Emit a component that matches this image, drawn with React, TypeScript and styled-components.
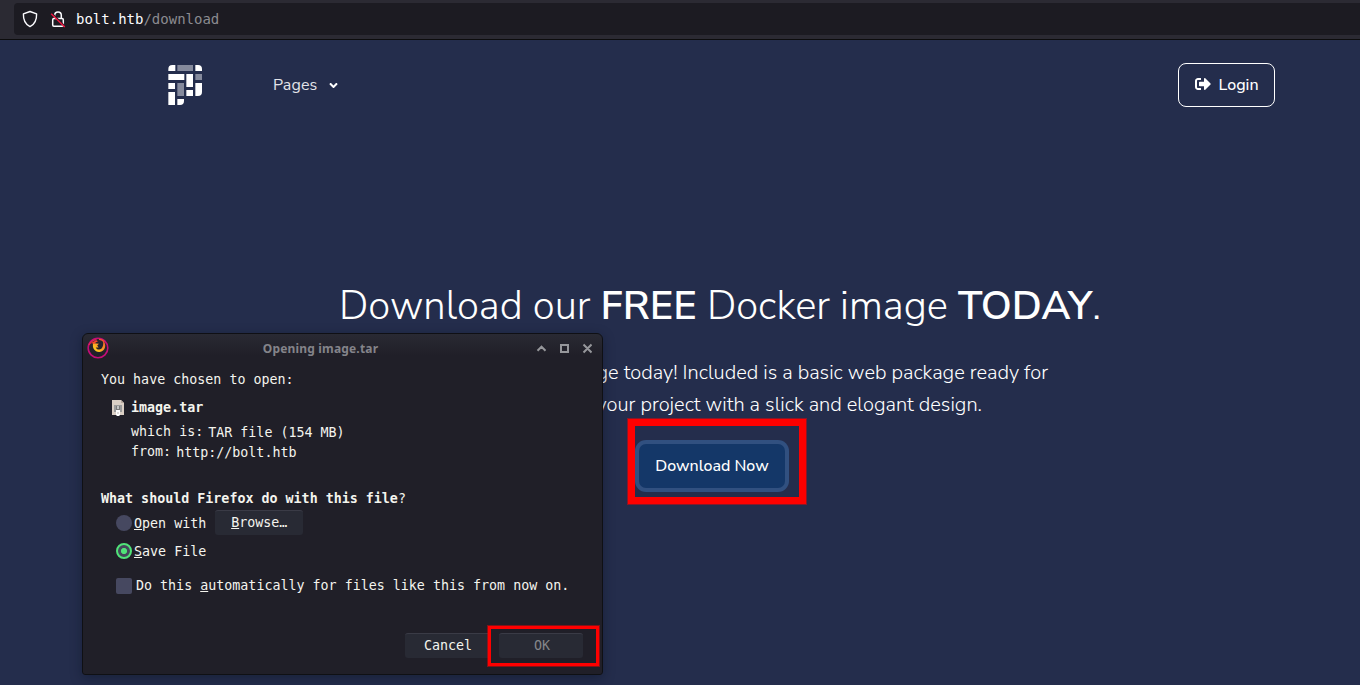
import React from 'react';
import styled, { createGlobalStyle } from 'styled-components';
import { FaAngleDown, FaSignOutAlt } from 'react-icons/fa';

const Global = createGlobalStyle`
  * { box-sizing: border-box; }
  body { margin: 0; background: #242d4c; overflow: hidden; }
`;

const SANS = '"Nunito Sans", "Open Sans", "Noto Sans", sans-serif';
const MONO = '"DejaVu Sans Mono", monospace';

const Page = styled.div`
  position: relative;
  width: 1360px;
  height: 685px;
  overflow: hidden;
  background: #242d4c;
  color: #fff;
  font-family: ${SANS};
`;

const BrowserBar = styled.div`
  height: 40px;
  padding: 3px 0 4px 14px;
  background: #2b2a33;
  border-bottom: 1px solid #0c0c0d;
`;

const UrlField = styled.div`
  display: flex;
  align-items: center;
  height: 32px;
  padding-left: 8px;
  border-radius: 4px 0 0 4px;
  background: #1c1b22;
  font: 14px/32px ${MONO};
  color: #8b8b90;
  svg { flex: none; margin-right: 12px; }
  svg + svg { margin-right: 10px; }
`;

const Host = styled.span`
  color: #fbfbfe;
`;

const Nav = styled.nav`
  display: flex;
  align-items: center;
  height: 90px;
  padding: 0 85px 0 168px;
`;

const PagesLink = styled.div`
  display: flex;
  align-items: center;
  gap: 9.5px;
  margin-left: 71px;
  font-size: 16px;
  letter-spacing: 0.1px;
  color: #e3e4e9;
`;

const LoginButton = styled.div`
  display: flex;
  align-items: center;
  gap: 8px;
  width: 97px;
  height: 44px;
  margin-left: auto;
  padding: 0 0 1px 15.5px;
  border: 1px solid #fff;
  border-radius: 8px;
  font-size: 16px;
  font-weight: 500;
  svg { margin-bottom: 2px; }
`;

const Hero = styled.main`
  display: flex;
  flex-direction: column;
  align-items: center;
  width: 1440px;
  padding-top: 146px;
`;

const Headline = styled.h1`
  margin: 0;
  font-size: 40px;
  font-weight: 300;
  line-height: 60px;
  white-space: nowrap;
  b { font-weight: 600; }
`;

const LeadGroup = styled.div`
  display: flex;
  flex-direction: column;
  align-items: center;
  margin-top: 21px;
`;

const Lead = styled.p<{ $width: number }>`
  width: ${(p) => p.$width}px;
  margin: 0;
  display: flex;
  justify-content: flex-end;
  font-size: 20px;
  font-weight: 300;
  line-height: 32px;
  white-space: nowrap;
`;

const DownloadButton = styled.div`
  width: 146px;
  height: 44px;
  margin: 23px 0 0 -16px;
  border-radius: 7px;
  background: #143768;
  box-shadow: 0 0 0 4px #315080;
  font-size: 16px;
  font-weight: 500;
  line-height: 44px;
  text-align: center;
`;

const Highlight = styled.div<{ $x: number; $y: number; $w: number; $h: number; $t: number }>`
  position: absolute;
  left: ${(p) => p.$x}px;
  top: ${(p) => p.$y}px;
  width: ${(p) => p.$w}px;
  height: ${(p) => p.$h}px;
  border: ${(p) => p.$t}px solid #fe0000;
  box-shadow: 0 0 0 1px rgba(254, 0, 0, 0.45);
`;

const Dialog = styled.section`
  position: absolute;
  left: 82px;
  top: 333px;
  width: 521px;
  height: 342px;
  border: 1px solid #0f1014;
  border-radius: 6px 6px 3px 3px;
  background: linear-gradient(#292a33 0, #201f28 22px);
  box-shadow: 0 3px 12px rgba(8, 14, 32, 0.4);
  font: 13.33px/20px ${MONO};
  color: #f4f4ee;
  white-space: pre;
`;

const TitleBar = styled.header`
  display: flex;
  align-items: center;
  height: 29px;
  padding: 0 10px 0 4px;
`;

const Title = styled.div`
  flex: 1;
  padding-right: 4px;
  text-align: center;
  font: bold 12px/29px "Noto Sans", sans-serif;
  letter-spacing: 0.17px;
  color: #84848a;
`;

const Body = styled.div`
  display: flex;
  flex-direction: column;
  padding: 7px 18px 0;
`;

const FileRow = styled.div`
  display: flex;
  align-items: center;
  height: 20px;
  margin: 8px 0 5px 11px;
  gap: 7px;
  font-weight: bold;
  svg { margin-bottom: 1px; }
`;

const DetailRow = styled.div`
  display: flex;
  height: 20px;
  margin-left: 30px;
  gap: 5px;
`;

const DetailLabel = styled.span`
  height: 20px;
  line-height: 18px;
`;

const Question = styled.div`
  margin-top: 26px;
  font-weight: bold;
  span { font-weight: normal; }
`;

const Option = styled.label<{ $h: number; $top?: number; $gap?: number }>`
  display: flex;
  align-items: center;
  height: ${(p) => p.$h}px;
  margin: ${(p) => p.$top ?? 0}px 0 0 15px;
  gap: ${(p) => p.$gap ?? 2}px;
`;

const Key = styled.span`
  text-decoration: underline;
  text-decoration-thickness: 1px;
  text-underline-offset: 1px;
`;

const Caption = styled.span<{ $drop?: number }>`
  padding-top: ${(p) => p.$drop ?? 0}px;
`;

const Radio = styled.span<{ $on?: boolean }>`
  width: 16px;
  height: 16px;
  border-radius: 50%;
  border: ${(p) => (p.$on ? '2px solid #50e378' : '0')};
  background: ${(p) => (p.$on ? 'radial-gradient(circle, #50e378 0 2.7px, #44475a 3.5px)' : '#464860')};
`;

const Check = styled.span`
  width: 16px;
  height: 16px;
  border-radius: 2px;
  background: #464860;
`;

const Button = styled.span<{ $w: number; $disabled?: boolean }>`
  display: flex;
  justify-content: center;
  width: ${(p) => p.$w}px;
  height: 25px;
  padding-left: ${(p) => (p.$disabled ? 2 : 0)}px;
  border-top: 1px solid #3a3b46;
  border-radius: 3px;
  background: #282a34;
  line-height: 23px;
  color: ${(p) => (p.$disabled ? '#85868a' : '#f4f4ee')};
`;

const BrowseSlot = styled.span`
  display: flex;
  margin: -1px 0 0 7px;
`;

const Footer = styled.footer`
  display: flex;
  justify-content: flex-end;
  gap: 8px;
  margin-top: 33px;
  padding-right: 1px;
`;

const Badge = styled.svg`
  margin-bottom: 1px;
`;

const Logo = () => (
  <svg width="34" height="40" viewBox="53 45 102 120">
    <g fill="#fff">
      <path d="M54 63v-6q0-12 12-12h9v18zM135 45h8q12 0 12 12v6h-20zM54 72h48v18H54zM108 72h20v39h-20zM54 99h20v18H54zM135 99h20v27q0 12-12 12h-8zM108 120h20v18h-20zM54 126h20v39H54zM81 147h20v6q0 12-12 12h-8z" />
    </g>
    <path fill="#858a9c" d="M81 45h47v18H81zM135 72h20v18h-20zM81 99h20v39H81z" />
  </svg>
);

const Shield = () => (
  <svg width="16" height="18" viewBox="0 0 16 18" fill="none" stroke="#fbfbfe" strokeWidth="1.4" strokeLinejoin="round">
    <path d="M8 1.500 14.600 3.900C14.800 9.800 12.500 14.300 8 16.600 3.500 14.300 1.200 9.800 1.400 3.900z" />
  </svg>
);

const Lock = () => (
  <svg width="16" height="18" viewBox="0 0 16 18" fill="none">
    <rect x="2.700" y="8.500" width="10.600" height="7.800" rx="1.200" stroke="#fbfbfe" strokeWidth="1.500" />
    <path d="M4.700 8V5.200a3.300 3.300 0 0 1 6.600 0V8" stroke="#fbfbfe" strokeWidth="1.500" />
    <path d="m2.200 3.500 13 13" stroke="#1c1b22" strokeWidth="1.500" />
    <path d="M1.200 3.700 14.800 17" stroke="#f0143f" strokeWidth="1.500" />
  </svg>
);

const FirefoxBadge = () => (
  <Badge width="22" height="22" viewBox="0 0 22 22" fill="none">
    <defs>
      <linearGradient id="flame" x1="1" y1="0" x2="0" y2="1">
        <stop offset="0" stopColor="#f4512f" />
        <stop offset="0.5" stopColor="#fb9a25" />
        <stop offset="1" stopColor="#ffe11f" />
      </linearGradient>
    </defs>
    <circle cx="11" cy="11" r="9.800" stroke="#c50d78" strokeWidth="1.600" />
    <path d="M2 8Q4.500 3 9.500 2.600" stroke="#e5264f" strokeWidth="1.200" />
    <path d="M6.200 6C4.800 11 8 15.200 12.500 14.900 18.300 14.500 20.300 7.800 15.800 3c1.300 5-.3 9.300-3.600 9.500-1.700.1-2.900-.8-3.500-2.100l2.900.2-1.400-2 1.800-1.800-2.400-.4z" fill="url(#flame)" />
    <path d="M3.600 6.300 6.400 4.700l2.900-1.500 1.700 1-2.300 1.200-1.500 1.500-2.300-.7z" fill="#f8482c" />
    <path d="M12 2.300q3.500-.2 5.200 3" stroke="#f4512f" strokeWidth="1.300" />
  </Badge>
);

const ArchiveIcon = () => (
  <svg width="12" height="16" viewBox="0 0 12 16">
    <path d="M0 0h9l3 3v12H0z" fill="#dacfc5" />
    <path d="M9 0v3h3z" fill="#b8a99e" />
    <path d="M2 5h8v7H2z" fill="#9b9b9b" />
    <path d="M4 6h1v3h2V6h1v5H4z" fill="#7b7b7b" />
    <path d="M5 6h2v3H5z" fill="#c4c4c4" />
    <path d="M4 10h4v5l-1 1H5l-1-1z" fill="#fff" />
    <path d="M5.500 12.500h1v1h-1z" fill="#77706b" />
  </svg>
);

const WindowControls = () => (
  <svg width="56" height="11" viewBox="-0.5 0 56 11" fill="none" stroke="#96979b" strokeWidth="2">
    <path d="m1 7.700 4-4 4 4M24.500 2h7v7h-7zM47 1.500l8 8M55 1.500l-8 8" />
  </svg>
);

export default function App() {
  return (
    <Page>
      <Global />
      <BrowserBar>
        <UrlField>
          <Shield />
          <Lock />
          <Host>bolt.htb</Host>/download
        </UrlField>
      </BrowserBar>
      <Nav>
        <Logo />
        <PagesLink>
          Pages
          <FaAngleDown size={13} color="#fff" />
        </PagesLink>
        <LoginButton>
          <FaSignOutAlt size={16} />
          Login
        </LoginButton>
      </Nav>
      <Hero>
        <Headline>Download our <b>FREE</b> Docker image <b>TODAY</b>.</Headline>
        <LeadGroup>
          <Lead $width={656}>ge today! Included is a basic web package ready for</Lead>
          <Lead $width={524}>your project with a slick and elogant design.</Lead>
        </LeadGroup>
        <DownloadButton>Download Now</DownloadButton>
      </Hero>
      <Highlight $x={628} $y={419} $w={178} $h={85} $t={7} />
      <Dialog>
        <TitleBar>
          <FirefoxBadge />
          <Title>Opening image.tar</Title>
          <WindowControls />
        </TitleBar>
        <Body>
          <div>You have chosen to open:</div>
          <FileRow><ArchiveIcon />image.tar</FileRow>
          <DetailRow><DetailLabel>which is:</DetailLabel><span>TAR file (154 MB)</span></DetailRow>
          <DetailRow><DetailLabel>from:</DetailLabel><span>http://bolt.htb</span></DetailRow>
          <Question>What should Firefox do with this file<span>?</span></Question>
          <Option $h={28}>
            <Radio />
            <Caption $drop={2}><Key>O</Key>pen with</Caption>
            <BrowseSlot><Button $w={88}><span><Key>B</Key>rowse…</span></Button></BrowseSlot>
          </Option>
          <Option $h={28}>
            <Radio $on />
            <Caption $drop={2}><Key>S</Key>ave File</Caption>
          </Option>
          <Option $h={28} $top={7} $gap={4}>
            <Check />
            <Caption>Do this <Key>a</Key>utomatically for files like this from now on.</Caption>
          </Option>
          <Footer>
            <Button $w={86}>Cancel</Button>
            <Button $w={84} $disabled>OK</Button>
          </Footer>
        </Body>
      </Dialog>
      <Highlight $x={488} $y={626} $w={111} $h={40} $t={3} />
    </Page>
  );
}
